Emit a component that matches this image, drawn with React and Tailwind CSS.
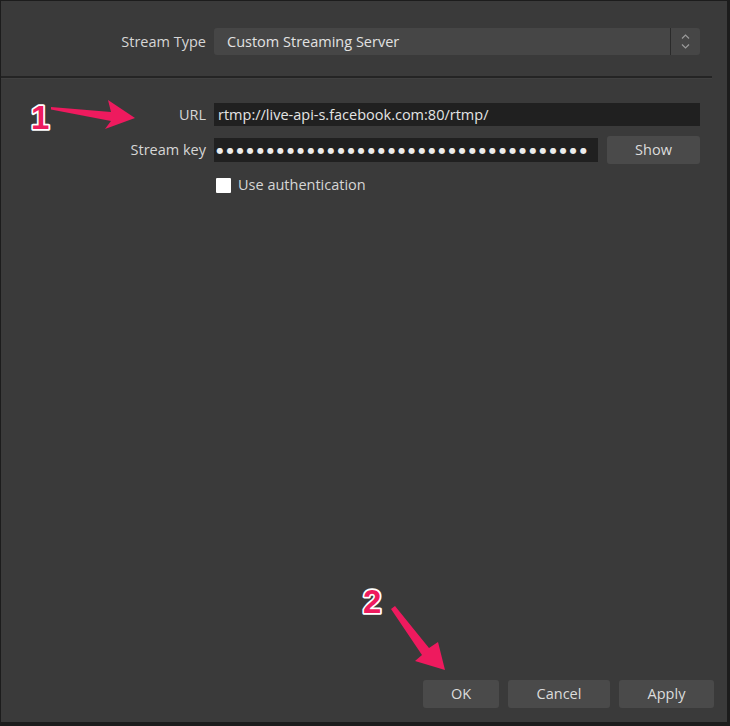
import React from 'react';

// --- OBS "Stream" settings page, with two tutorial callouts on top ---

const FONT = { fontFamily: '"Open Sans", "Noto Sans", "DejaVu Sans", sans-serif' };

const Label = ({ children }) => (
  <div className="w-[205px] shrink-0 text-right text-[14.5px] text-[#d6d6d6]">{children}</div>
);

const Spinner = () => (
  <div className="w-[30px] h-full border-l border-[#2a2a2a] flex flex-col items-center justify-center gap-[5px]">
    <svg width="9" height="5" viewBox="0 0 9 5">
      <polyline points="1,4.5 4.5,1 8,4.5" fill="none" stroke="#9a9a9a" strokeWidth="1.2" />
    </svg>
    <svg width="9" height="5" viewBox="0 0 9 5">
      <polyline points="1,0.5 4.5,4 8,0.5" fill="none" stroke="#9a9a9a" strokeWidth="1.2" />
    </svg>
  </div>
);

const Button = ({ children, w }) => (
  <button className={`${w} h-[28px] rounded-[3px] bg-[#4a4a4a] text-[14.5px] text-[#dcdcdc]`}>{children}</button>
);

const Callouts = () => (
  <svg className="absolute left-0 top-0 pointer-events-none" width="730" height="726" viewBox="0 0 730 726">
    <polygon points="50,106 110,111 107,99 134,117 104,128 110,120 50,108.5" fill="#ee1a5e" />
    <polygon points="390,608 421,654 414,660 444,669 437,641 428,647 394,605" fill="#ee1a5e" />
    <text x="30" y="128" fontSize="33" fontWeight="700" fill="#ee1a5e" stroke="#ffffff" strokeWidth="3.5"
      strokeLinejoin="round" style={{ paintOrder: 'stroke', fontFamily: '"Liberation Sans", Arial, sans-serif' }}>1</text>
    <text x="362" y="612" fontSize="33" fontWeight="700" fill="#ee1a5e" stroke="#ffffff" strokeWidth="3.5"
      strokeLinejoin="round" style={{ paintOrder: 'stroke', fontFamily: '"Liberation Sans", Arial, sans-serif' }}>2</text>
  </svg>
);

export default function App() {
  const dots = Array.from({ length: 37 });

  return (
    <div
      className="relative w-[730px] h-[726px] bg-[#3a3a3a] border-l border-t border-r-[3px] border-b-[4px] border-[#1c1c1c] flex flex-col"
      style={FONT}
    >
      {/* Stream type */}
      <div className="mt-[27px] h-[27px] flex items-center gap-[8px]">
        <Label>Stream Type</Label>
        <div className="w-[486px] h-full rounded-[3px] bg-[#464646] flex items-center">
          <div className="flex-1 pl-[13px] text-[14.5px] text-[#e2e2e2]">Custom Streaming Server</div>
          <Spinner />
        </div>
      </div>

      {/* separator */}
      <div className="mt-[21px] w-[711px] h-[2px] bg-[#242424]" />
      <div className="w-[711px] h-[1px] bg-[#404040]" />

      {/* URL */}
      <div className="mt-[24px] h-[23px] flex items-center gap-[8px]">
        <Label>URL</Label>
        <div className="w-[486px] h-full bg-[#202020] flex items-center pl-[4px] text-[14.5px] text-[#e4e4e4]">
          rtmp://live-api-s.facebook.com:80/rtmp/
        </div>
      </div>

      {/* Stream key */}
      <div className="mt-[10px] h-[28px] flex items-center gap-[8px]">
        <Label>Stream key</Label>
        <div className="w-[384px] h-[24px] bg-[#202020] flex items-center pl-[1px] overflow-hidden">
          {dots.map((_, i) => (
            <span key={i} className="w-[10.1px] shrink-0 text-center text-[8px] leading-none text-[#ececec]">●</span>
          ))}
        </div>
        <button className="ml-[1px] w-[93px] h-[28px] rounded-[3px] bg-[#4a4a4a] text-[14.5px] text-[#dcdcdc]">Show</button>
      </div>

      {/* Authentication */}
      <div className="mt-[13px] h-[16px] flex items-center">
        <div className="w-[215px] shrink-0" />
        <div className="w-[15px] h-[15px] bg-white rounded-[1px]" />
        <span className="ml-[7px] text-[14.5px] text-[#d6d6d6]">Use authentication</span>
      </div>

      <div className="flex-1" />

      {/* Dialog buttons */}
      <div className="mb-[14px] pr-[13px] flex justify-end gap-[9px]">
        <Button w="w-[76px]">OK</Button>
        <Button w="w-[102px]">Cancel</Button>
        <Button w="w-[95px]">Apply</Button>
      </div>

      <Callouts />
    </div>
  );
}
